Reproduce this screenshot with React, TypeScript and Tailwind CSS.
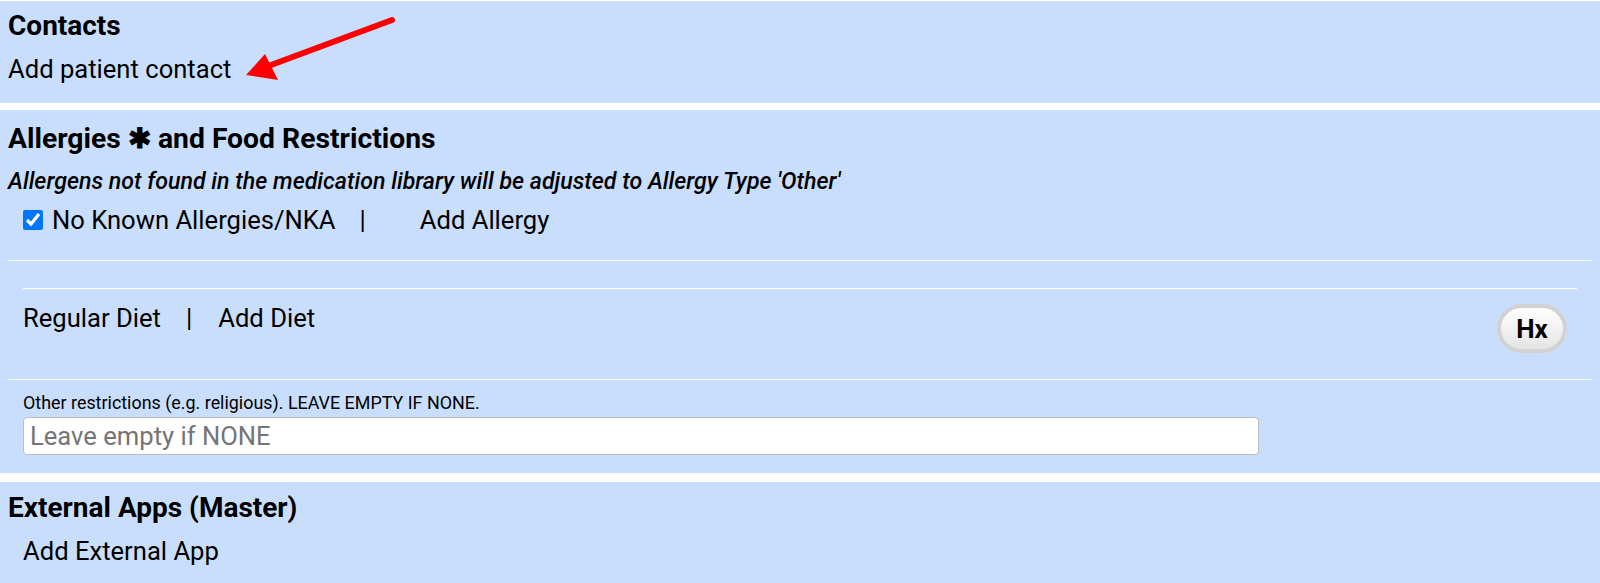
import { useState } from "react";

const Section = ({ children, className = "" }: { children: React.ReactNode; className?: string }) => (
  <section className={`bg-[#c9defc] px-2 ${className}`}>{children}</section>
);

const RedArrow = () => (
  <svg className="absolute left-0 top-0 pointer-events-none" width="420" height="100" viewBox="0 0 420 100">
    <line x1="392" y1="19" x2="263" y2="67" stroke="#ff0000" strokeWidth="6" strokeLinecap="round" />
    <polygon points="246,74 265,53 278,79" fill="#ff0000" />
  </svg>
);

export default function App() {
  const [nka, setNka] = useState(true);

  return (
    <div className="min-h-[583px] bg-white pt-px text-black font-['Roboto','Liberation_Sans',sans-serif]">
      {/* Contacts */}
      <Section className="relative h-[102px] pt-[8px]">
        <h2 className="text-[28px] leading-[33px] font-bold">Contacts</h2>
        <div className="mt-[12px] text-[25.6px] leading-[30px]">Add patient contact</div>
        <RedArrow />
      </Section>

      {/* Allergies */}
      <Section className="mt-[7px] h-[363px] pt-[12px]">
        <h2 className="text-[28.3px] leading-[33px] font-bold">Allergies ✱ and Food Restrictions</h2>
        <div className="mt-[13px] text-[23.2px] leading-[27px] italic font-medium">
          Allergens not found in the medication library will be adjusted to Allergy Type 'Other'
        </div>
        <div className="mt-[10px] flex items-center px-[15px] text-[25.6px] leading-[30px]">
          <input
            type="checkbox"
            checked={nka}
            onChange={() => setNka(!nka)}
            className="h-5 w-5 accent-[#0075ff]"
          />
          <span className="ml-[9px]">No Known Allergies/NKA</span>
          <span className="ml-[24px]">|</span>
          <span className="ml-[54px]">Add Allergy</span>
        </div>

        <div className="mt-[25px] border-t border-white">
          <div className="mx-[15px] mt-[27px] border-t border-white">
            <div className="flex items-start justify-between pt-[14px] pb-[26px] pr-[10px]">
              <div className="flex text-[25.6px] leading-[30px]">
                <span>Regular Diet</span>
                <span className="ml-[25px]">|</span>
                <span className="ml-[26px]">Add Diet</span>
              </div>
              <button className="mt-px h-[49px] w-[70px] rounded-full border-4 border-[#d2d2d2] bg-linear-to-b from-white to-[#e4e4e4] text-[26px] font-bold leading-none">
                Hx
              </button>
            </div>
          </div>
        </div>

        <div className="border-t border-white px-[15px] pt-[12px]">
          <div className="text-[17.9px] leading-[21px]">Other restrictions (e.g. religious). LEAVE EMPTY IF NONE.</div>
          <input
            type="text"
            placeholder="Leave empty if NONE"
            className="mt-[4px] h-[38px] w-[1236px] rounded-[4px] border border-[#bdbdbd] bg-white px-[6px] text-[25.6px] placeholder:text-[#757575] outline-none"
          />
        </div>
      </Section>

      {/* External Apps */}
      <Section className="mt-[9px] h-[101px] pt-[9px]">
        <h2 className="text-[28px] leading-[33px] font-bold">External Apps (Master)</h2>
        <div className="mt-[12px] px-[15px] text-[25.6px] leading-[30px]">Add External App</div>
      </Section>
    </div>
  );
}
